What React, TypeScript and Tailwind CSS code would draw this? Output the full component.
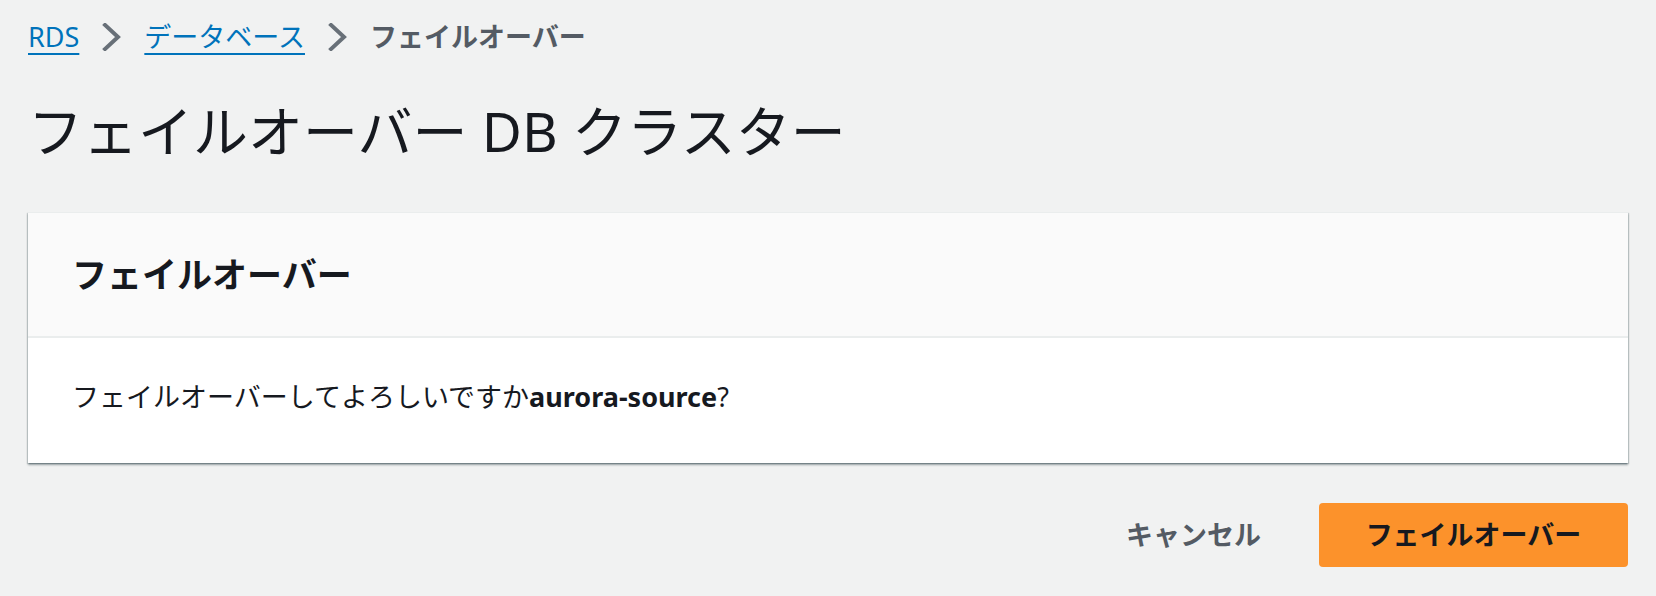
const font = {
  fontFamily: '"Noto Sans", "Noto Sans CJK JP", sans-serif',
};

function Chevron() {
  return (
    <svg className="mx-[23px] w-[19px] h-[28px] text-[#687078]" viewBox="0 0 19 28" fill="none">
      <polyline points="3,2 16,14 3,26" stroke="currentColor" strokeWidth="4" strokeLinecap="square" />
    </svg>
  );
}

function Crumbs() {
  return (
    <nav className="flex items-center h-[40px] text-[27px] leading-[40px]">
      <a className="text-[#0073bb] underline decoration-2 underline-offset-[6px]" href="#">
        RDS
      </a>
      <Chevron />
      <a className="text-[#0073bb] underline decoration-2 underline-offset-[6px]" href="#">
        データベース
      </a>
      <Chevron />
      <span className="text-[#545b64] font-bold">フェイルオーバー</span>
    </nav>
  );
}

export default function App() {
  return (
    <div className="min-h-screen bg-[#f1f2f2] px-[28px] pt-[17px] text-[#16191f]" style={font}>
      <Crumbs />

      <h1 className="mt-[38px] text-[55px] leading-[72px] font-normal">
        フェイルオーバー DB クラスター
      </h1>

      <div className="mt-[45px] bg-white border-t border-[#eaeded] shadow-[0_2px_2px_0_rgba(0,28,36,0.35),1px_1px_1px_0_rgba(0,28,36,0.15),-1px_1px_1px_0_rgba(0,28,36,0.15)]">
        <div className="h-[125px] bg-[#fafafa] border-b-2 border-[#eaeded] px-[44px] flex items-center">
          <h2 className="text-[35px] font-bold leading-[48px]">フェイルオーバー</h2>
        </div>
        <div className="h-[125px] px-[44px] flex items-center pb-[8px]">
          <p className="text-[27px] leading-[40px]">
            フェイルオーバーしてよろしいですか<b className="font-bold">aurora-source</b>?
          </p>
        </div>
      </div>

      <div className="mt-[40px] flex justify-end items-center gap-[30px]">
        <button className="h-[64px] px-[28px] text-[27px] font-bold text-[#545b64]">
          キャンセル
        </button>
        <button className="h-[64px] w-[309px] rounded-[4px] bg-[#fc922b] text-[27px] font-bold text-[#16191f]">
          フェイルオーバー
        </button>
      </div>
    </div>
  );
}
